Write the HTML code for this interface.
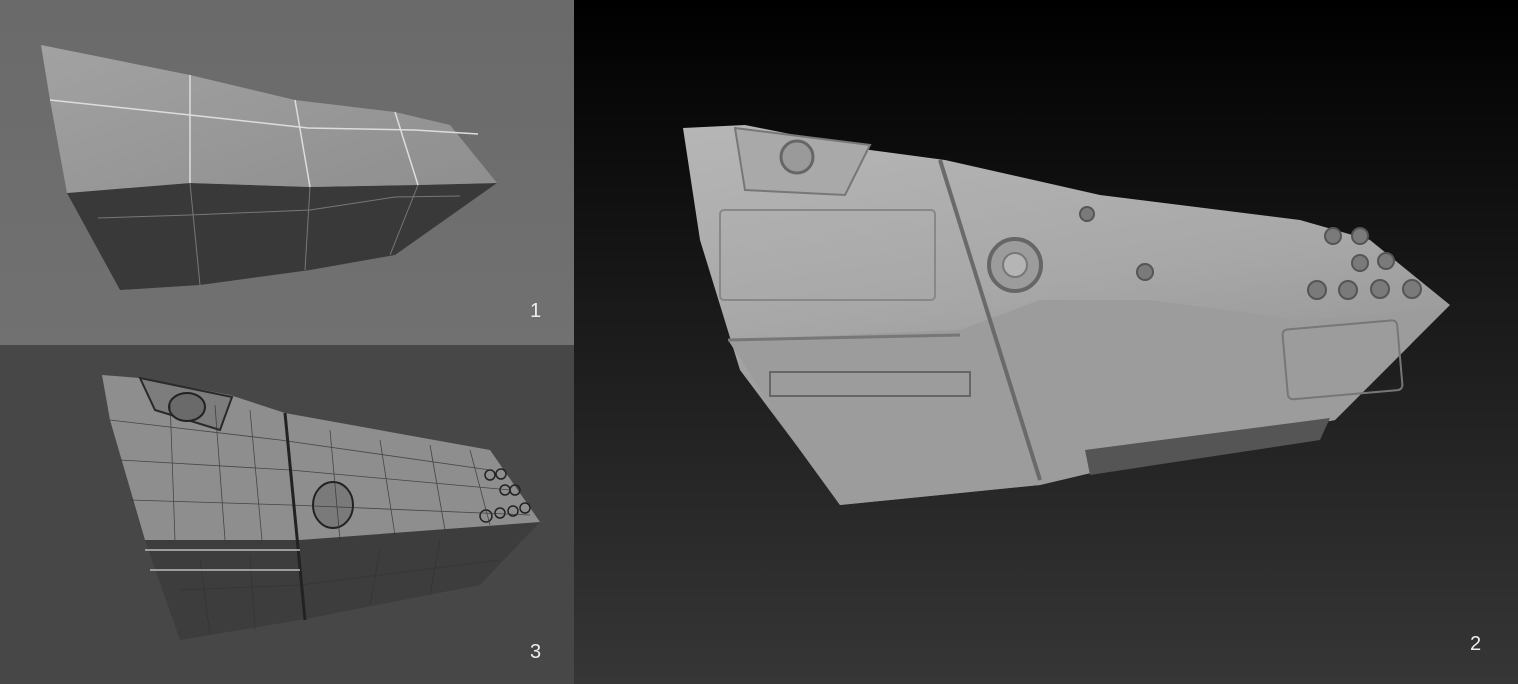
<!DOCTYPE html>
<html><head><style>
html,body{margin:0;padding:0;width:1518px;height:684px;overflow:hidden;background:#000}
svg{display:block}
</style></head><body>
<svg width="1518" height="684" viewBox="0 0 1518 684" xmlns="http://www.w3.org/2000/svg">
<defs>
<linearGradient id="bgR" x1="0" y1="0" x2="0" y2="1">
<stop offset="0" stop-color="#000"/><stop offset="0.5" stop-color="#1c1c1c"/><stop offset="1" stop-color="#363636"/></linearGradient>
<linearGradient id="bg1" x1="0" y1="0" x2="0" y2="1">
<stop offset="0" stop-color="#6a6a6a"/><stop offset="1" stop-color="#717171"/></linearGradient>
<linearGradient id="top1" x1="0" y1="0" x2="1" y2="1">
<stop offset="0" stop-color="#a2a2a2"/><stop offset="1" stop-color="#8e8e8e"/></linearGradient>
<linearGradient id="objR" x1="0" y1="0" x2="0.3" y2="1">
<stop offset="0" stop-color="#b6b6b6"/><stop offset="0.5" stop-color="#a8a8a8"/><stop offset="1" stop-color="#8e8e8e"/></linearGradient>
</defs>
<rect x="574" y="0" width="944" height="684" fill="url(#bgR)"/>
<rect x="0" y="0" width="574" height="345" fill="url(#bg1)"/>
<rect x="0" y="345" width="574" height="339" fill="#474747"/>

<polygon points="67,193 120,290 200,285 310,270 395,255 497,183 418,185 310,187 190,183" fill="#393939"/>
<polygon points="41,45 190,75 295,100 395,112 450,125 497,183 418,185 310,187 190,183 67,193 50,100" fill="url(#top1)"/>
<g stroke="#ddd" stroke-width="1.5" fill="none">
<path d="M50,100 L190,115 L308,128 L415,130 L478,134"/>
<path d="M190,75 L190,183"/><path d="M295,100 L310,187"/><path d="M395,112 L418,185"/>
</g>
<g stroke="#777" stroke-width="1" fill="none">
<path d="M98,218 L190,215 L310,210 L395,197 L460,196"/>
<path d="M190,183 L200,285"/><path d="M310,187 L305,270"/><path d="M418,185 L390,255"/>
</g>
<text x="530" y="317" fill="#eee" font-family="Liberation Sans, sans-serif" font-size="20">1</text>

<polygon points="145,540 300,540 540,522 480,585 300,620 180,640" fill="#3d3d3d"/>
<polygon points="102,375 140,378 230,395 285,413 490,450 540,522 300,540 145,540 110,420" fill="#8e8e8e"/>
<polygon points="140,378 232,397 220,430 155,410" fill="#7d7d7d" stroke="#2a2a2a" stroke-width="2"/>
<ellipse cx="187" cy="407" rx="18" ry="14" fill="#6a6a6a" stroke="#222" stroke-width="2"/>
<ellipse cx="333" cy="505" rx="20" ry="23" fill="#7a7a7a" stroke="#222" stroke-width="2"/>
<g fill="none" stroke="#222" stroke-width="1.5">
<circle cx="490" cy="475" r="5"/><circle cx="501" cy="474" r="5"/><circle cx="505" cy="490" r="5"/><circle cx="515" cy="490" r="5"/>
<circle cx="486" cy="516" r="6"/><circle cx="500" cy="513" r="5"/><circle cx="513" cy="511" r="5"/><circle cx="525" cy="508" r="5"/>
</g>
<g stroke="#333" stroke-width="0.8" fill="none" opacity="0.8">
<path d="M110,420 L280,440 L490,470"/><path d="M120,460 L290,470 L510,490"/><path d="M130,500 L290,505 L530,515"/>
<path d="M170,400 L175,540"/><path d="M215,405 L225,540"/><path d="M250,410 L262,540"/><path d="M330,430 L340,540"/><path d="M380,440 L395,535"/><path d="M430,445 L445,530"/><path d="M470,450 L490,525"/>
<path d="M180,590 L300,585 L500,560"/><path d="M200,560 L210,635"/><path d="M250,555 L255,630"/><path d="M380,550 L370,605"/><path d="M440,540 L430,595"/>
</g>
<path d="M285,413 L305,620" stroke="#222" stroke-width="3"/>
<path d="M145,550 L300,550 M150,570 L300,570" stroke="#bbb" stroke-width="1.5"/>
<text x="530" y="658" fill="#eee" font-family="Liberation Sans, sans-serif" font-size="20">3</text>

<polygon points="683,128 745,125 870,150 945,160 1100,195 1300,220 1370,240 1450,305 1410,345 1335,420 1230,440 1040,485 840,505 800,450 740,370 700,240" fill="url(#objR)"/>
<polygon points="728,340 960,330 1040,300 1150,300 1300,320 1440,310 1410,345 1335,420 1230,440 1040,485 840,505 800,450" fill="#9c9c9c"/>
<path d="M940,160 L1040,480" stroke="#6a6a6a" stroke-width="4"/>
<path d="M728,340 L960,335" stroke="#777" stroke-width="3"/>
<polygon points="1085,450 1330,418 1320,440 1090,475" fill="#555"/>
<polygon points="735,128 870,145 845,195 745,190" fill="#a9a9a9" stroke="#777" stroke-width="2"/>
<circle cx="797" cy="157" r="16" fill="#9a9a9a" stroke="#666" stroke-width="3"/>
<rect x="720" y="210" width="215" height="90" rx="4" fill="none" stroke="#888" stroke-width="2"/>
<circle cx="1015" cy="265" r="26" fill="#9c9c9c" stroke="#666" stroke-width="4"/>
<circle cx="1015" cy="265" r="12" fill="#b5b5b5" stroke="#777" stroke-width="2"/>
<rect x="770" y="372" width="200" height="24" fill="none" stroke="#666" stroke-width="2"/>
<g fill="#7a7a7a" stroke="#555" stroke-width="2">
<circle cx="1333" cy="236" r="8"/><circle cx="1360" cy="236" r="8"/><circle cx="1360" cy="263" r="8"/><circle cx="1386" cy="261" r="8"/>
<circle cx="1317" cy="290" r="9"/><circle cx="1348" cy="290" r="9"/><circle cx="1380" cy="289" r="9"/><circle cx="1412" cy="289" r="9"/>
<circle cx="1145" cy="272" r="8"/><circle cx="1087" cy="214" r="7"/>
</g>
<rect x="1285" y="325" width="115" height="70" rx="5" fill="none" stroke="#777" stroke-width="2" transform="rotate(-5 1340 360)"/>
<text x="1470" y="650" fill="#eee" font-family="Liberation Sans, sans-serif" font-size="20">2</text>
</svg>
</body></html>
